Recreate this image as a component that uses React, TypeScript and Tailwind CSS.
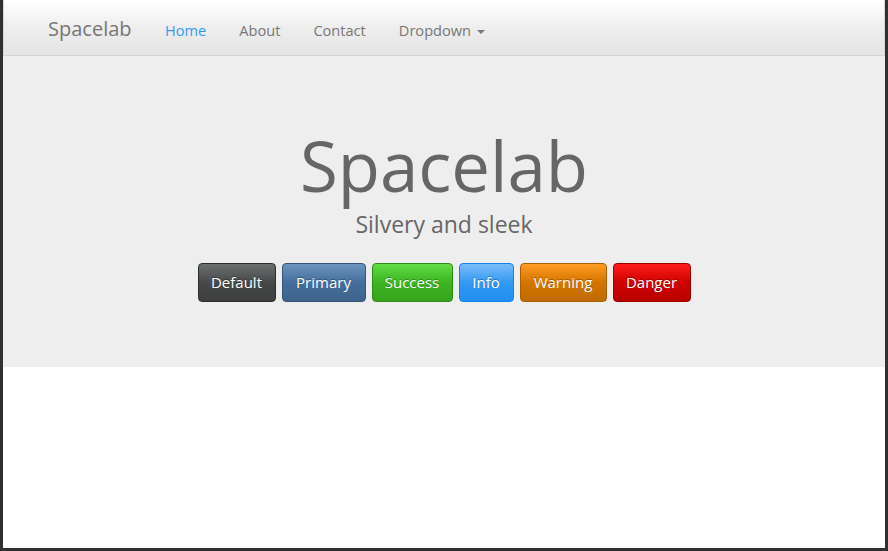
export default function App() {
  const buttons = [
    { label: 'Default', cls: 'w-[78px] border-[#2c2d2d] bg-[linear-gradient(#6d7070,#474949_50%,#3d3f3f)]' },
    { label: 'Primary', cls: 'w-[84px] border-[#345578] bg-[linear-gradient(#6d94bf,#446e9b_50%,#3e648d)]' },
    { label: 'Success', cls: 'w-[81px] border-[#2e8a19] bg-[linear-gradient(#61dd45,#3cb521_50%,#37a41e)]' },
    { label: 'Info', cls: 'w-[55px] border-[#1082e8] bg-[linear-gradient(#7bbdf7,#3399f3_50%,#208ff2)]' },
    { label: 'Warning', cls: 'w-[87px] border-[#a86000] bg-[linear-gradient(#ff9c21,#d47500_50%,#c06a00)]' },
    { label: 'Danger', cls: 'w-[78px] border-[#9a0200] bg-[linear-gradient(#ff1d1b,#cd0200_50%,#b90200)]' },
  ];

  return (
    <div className="h-[551px] w-[888px] bg-[#2f302f] px-[3px] pb-[3px] font-['Open_Sans',sans-serif]">
      <div className="h-full bg-white flex flex-col">
        {/* Navbar */}
        <nav className="h-[56px] border-x border-b border-[#d5d5d5] bg-[linear-gradient(#ffffff,#eeeeee_50%,#e4e4e4)] flex items-center pl-[44px] pt-[5px]">
          <a className="text-[20px] text-[#777] mr-[17px] -mt-[3px]">Spacelab</a>
          <ul className="flex items-center text-[14.6px] text-[#777] mt-[2px]">
            <li className="px-[16.5px] text-[#3399f3]">Home</li>
            <li className="px-[16.5px]">About</li>
            <li className="px-[16.5px]">Contact</li>
            <li className="px-[16.5px] flex items-center">
              Dropdown
              <span className="ml-[6px] mt-[2px] w-0 h-0 border-x-4 border-x-transparent border-t-4 border-t-[#777]" />
            </li>
          </ul>
        </nav>

        {/* Jumbotron */}
        <section className="h-[311px] bg-[#eeeeee] flex flex-col items-center pt-[69px]">
          <h1 className="text-[69px] leading-[80px] text-[#666]">Spacelab</h1>
          <p className="text-[23px] leading-[32px] text-[#666] mt-[3px]">Silvery and sleek</p>
          <div className="flex gap-[6px] mt-[23px]">
            {buttons.map((b) => (
              <button
                key={b.label}
                className={`h-[39px] rounded-[4px] border text-[15px] text-white [text-shadow:0_-1px_0_rgba(0,0,0,0.3)] ${b.cls}`}
              >
                {b.label}
              </button>
            ))}
          </div>
        </section>
      </div>
    </div>
  );
}
